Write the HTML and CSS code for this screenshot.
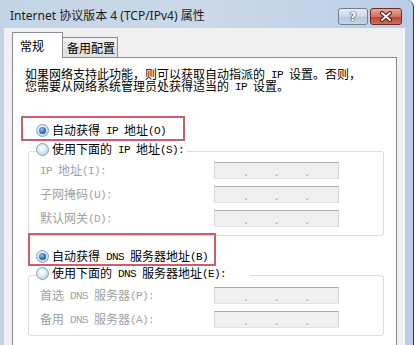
FILE: index.html
```html
<!DOCTYPE html>
<html lang="zh-CN">
<head>
    <meta charset="UTF-8">
    <title>Internet 协议版本 4 (TCP/IPv4) 属性</title>
    <link rel="stylesheet" href="styles.css">
</head>
<body>
    <div class="window">
        <div class="titlebar">
            <span class="title">Internet 协议版本 4 (TCP/IPv4) 属性</span>
            <div class="title-btns">
                <button class="help-btn">?</button>
                <button class="close-btn">
                    <svg width="14" height="11" viewBox="0 0 14 11">
                        <path d="M3 2 L11 9 M11 2 L3 9" stroke="#4a1812" stroke-width="4" stroke-linecap="round"/>
                        <path d="M3 2 L11 9 M11 2 L3 9" stroke="#ffffff" stroke-width="2" stroke-linecap="round"/>
                    </svg>
                </button>
            </div>
        </div>

        <div class="client">
            <div class="tabs">
                <div class="tab active">常规</div>
                <div class="tab">备用配置</div>
            </div>

            <div class="panel">
                <div class="desc">
                    <p>如果网络支持此功能，则可以获取自动指派的<span class="en"> IP </span>设置。否则，</p>
                    <p>您需要从网络系统管理员处获得适当的<span class="en"> IP </span>设置。</p>
                </div>

                <div class="opt">
                    <span class="radio checked"></span>
                    <span>自动获得<span class="en"> IP </span>地址<span class="en">(O)</span></span>
                </div>

                <div class="group">
                    <div class="opt legend">
                        <span class="radio"></span>
                        <span>使用下面的<span class="en"> IP </span>地址<span class="en">(S):</span></span>
                    </div>
                    <div class="fields">
                        <div class="field">
                            <label><span class="en">IP </span>地址<span class="en">(I):</span></label>
                            <div class="ip"><span></span><i>.</i><span></span><i>.</i><span></span><i>.</i><span></span></div>
                        </div>
                        <div class="field">
                            <label>子网掩码<span class="en">(U):</span></label>
                            <div class="ip"><span></span><i>.</i><span></span><i>.</i><span></span><i>.</i><span></span></div>
                        </div>
                        <div class="field">
                            <label>默认网关<span class="en">(D):</span></label>
                            <div class="ip"><span></span><i>.</i><span></span><i>.</i><span></span><i>.</i><span></span></div>
                        </div>
                    </div>
                </div>

                <div class="opt opt-dns">
                    <span class="radio checked"></span>
                    <span>自动获得<span class="en"> DNS </span>服务器地址<span class="en">(B)</span></span>
                </div>

                <div class="group group-dns">
                    <div class="opt legend legend-wide">
                        <span class="radio"></span>
                        <span>使用下面的<span class="en"> DNS </span>服务器地址<span class="en">(E):</span></span>
                    </div>
                    <div class="fields">
                        <div class="field">
                            <label>首选<span class="en"> DNS </span>服务器<span class="en">(P):</span></label>
                            <div class="ip"><span></span><i>.</i><span></span><i>.</i><span></span><i>.</i><span></span></div>
                        </div>
                        <div class="field">
                            <label>备用<span class="en"> DNS </span>服务器<span class="en">(A):</span></label>
                            <div class="ip"><span></span><i>.</i><span></span><i>.</i><span></span><i>.</i><span></span></div>
                        </div>
                    </div>
                </div>

                <!-- red highlight boxes drawn over the dialog -->
                <div class="mark mark-ip"></div>
                <div class="mark mark-dns"></div>
            </div>
        </div>
    </div>
</body>
</html>
```

FILE: styles.css
```css
* {
    margin: 0;
    padding: 0;
    box-sizing: border-box;
}

body {
    width: 417px;
    height: 345px;
    overflow: hidden;
    background: #ffffff;
    font-family: "Noto Sans CJK SC", sans-serif;
    font-size: 12px;
    color: #000;
}

.window {
    width: 414px;
    height: 345px;
    background: linear-gradient(90deg, #c3d4e7, #cbd9e8 50%, #b9cee6);
    border-right: 1px solid #2c3c4e;
    border-top-right-radius: 7px;
    display: flex;
    flex-direction: column;
}

.titlebar {
    height: 28px;
    flex-shrink: 0;
    display: flex;
    align-items: flex-start;
    justify-content: space-between;
    padding: 0 11px 0 10px;
}

.title {
    font-family: "Noto Sans", "Noto Sans CJK SC", sans-serif;
    font-size: 12px;
    line-height: 16px;
    margin-top: 8px;
    color: #1b1b1b;
}

.title-btns {
    display: flex;
    gap: 2px;
    margin-top: 8px;
}

.title-btns button {
    height: 17px;
    border-radius: 3px;
    display: flex;
    align-items: center;
    justify-content: center;
}

.help-btn {
    width: 30px;
    border: 1px solid #6e8092;
    background: linear-gradient(#e6eef6, #c9d8e8 50%, #b4c7dc 51%, #c5d6e8);
    font-family: "DejaVu Sans", sans-serif;
    font-size: 12px;
    font-weight: bold;
    color: #ffffff;
    text-shadow: 0 0 1px #2b3b4d, 0 0 1px #2b3b4d, 0 0 1px #2b3b4d;
}

.close-btn {
    width: 32px;
    border: 1px solid #6c2b24;
    background: linear-gradient(#e9a99c, #d47161 50%, #c2412f 51%, #d0705c);
}

.client {
    width: 401px;
    flex: 1;
    margin-left: 4px;
    background: #f0f0f0;
    border-right: 2px solid #f3f7fb;
    padding: 4px 0 0 8px;
}

.tabs {
    display: flex;
    align-items: flex-end;
    height: 25px;
}

.tab {
    border: 1px solid #898c95;
    border-bottom: none;
    line-height: 16px;
    white-space: nowrap;
}

.tab.active {
    width: 51px;
    height: 26px;
    margin-bottom: -1px;
    padding: 5px 0 0 7px;
    background: #ffffff;
    position: relative;
    z-index: 1;
}

.tab:not(.active) {
    width: 55px;
    height: 20px;
    border-left: none;
    padding: 2px 0 0 4px;
    background: linear-gradient(#f4f4f4, #e6e6e6 50%, #dcdcdc 51%, #e4e4e4);
}

.panel {
    position: relative;
    width: 385px;
    height: 300px;
    background: #ffffff;
    border: 1px solid #898c95;
}

.desc {
    margin: 10px 0 0 12px;
    white-space: nowrap;
}

.desc p {
    height: 12px;
    line-height: 12px;
}

/* half-width latin runs, 6px per char like the dialog's bitmap font */
.en {
    font-family: "Liberation Mono", monospace;
    font-size: 11px;
    letter-spacing: -0.6px;
    white-space: pre;
    vertical-align: 1px;
}

.opt {
    display: flex;
    align-items: center;
    gap: 3px;
    height: 16px;
    line-height: 16px;
    margin: 30px 0 0 23px;
    white-space: nowrap;
}

.radio {
    width: 13px;
    height: 13px;
    border-radius: 50%;
    border: 1px solid #87a1b8;
    background: radial-gradient(circle at 45% 40%, #ffffff 0, #e4f1fa 35%, #b6d6ec 75%, #9dc4e1);
    display: flex;
    align-items: center;
    justify-content: center;
    flex-shrink: 0;
}

.radio.checked::after {
    content: "";
    width: 7px;
    height: 7px;
    border-radius: 50%;
    background: radial-gradient(circle at 40% 35%, #8fc4f2, #2f6fb5 55%, #17416f);
}

.group {
    margin: 13px 0 0 15px;
    width: 356px;
    border: 1px solid #d5dfe5;
    border-radius: 3px;
    padding-bottom: 8px;
}

.legend {
    margin: -11px 0 0 7px;
    width: fit-content;
    background: #ffffff;
    padding-right: 3px;
}

.legend-wide {
    padding-right: 24px;
}

.fields {
    display: flex;
    flex-direction: column;
    gap: 7px;
    margin-top: 5px;
}

.group-dns .fields {
    margin-top: 6px;
}

.field {
    display: flex;
    align-items: center;
    height: 17px;
}

.field label {
    width: 185px;
    padding-left: 11px;
    color: #a2a2a2;
    white-space: nowrap;
    line-height: 16px;
}

.ip {
    width: 125px;
    height: 17px;
    background: #f0f0f0;
    border: 1px solid;
    border-color: #a8abaf #d7dadd #e2e4e6 #d7dadd;
    display: flex;
    align-items: flex-end;
    padding: 0 2px 2px;
}

.ip span {
    flex: 1;
}

.ip i {
    font-style: normal;
    font-size: 11px;
    line-height: 9px;
    color: #9c9c9c;
}

.opt-dns {
    margin-top: 12px;
}

.group-dns {
    margin-top: 11px;
    padding-bottom: 7px;
}

.mark {
    position: absolute;
    border: 2px solid #cf5c68;
}

.mark-ip {
    left: 8px;
    top: 58px;
    width: 164px;
    height: 25px;
}

.mark-dns {
    left: 15px;
    top: 175px;
    width: 188px;
    height: 33px;
}
```
